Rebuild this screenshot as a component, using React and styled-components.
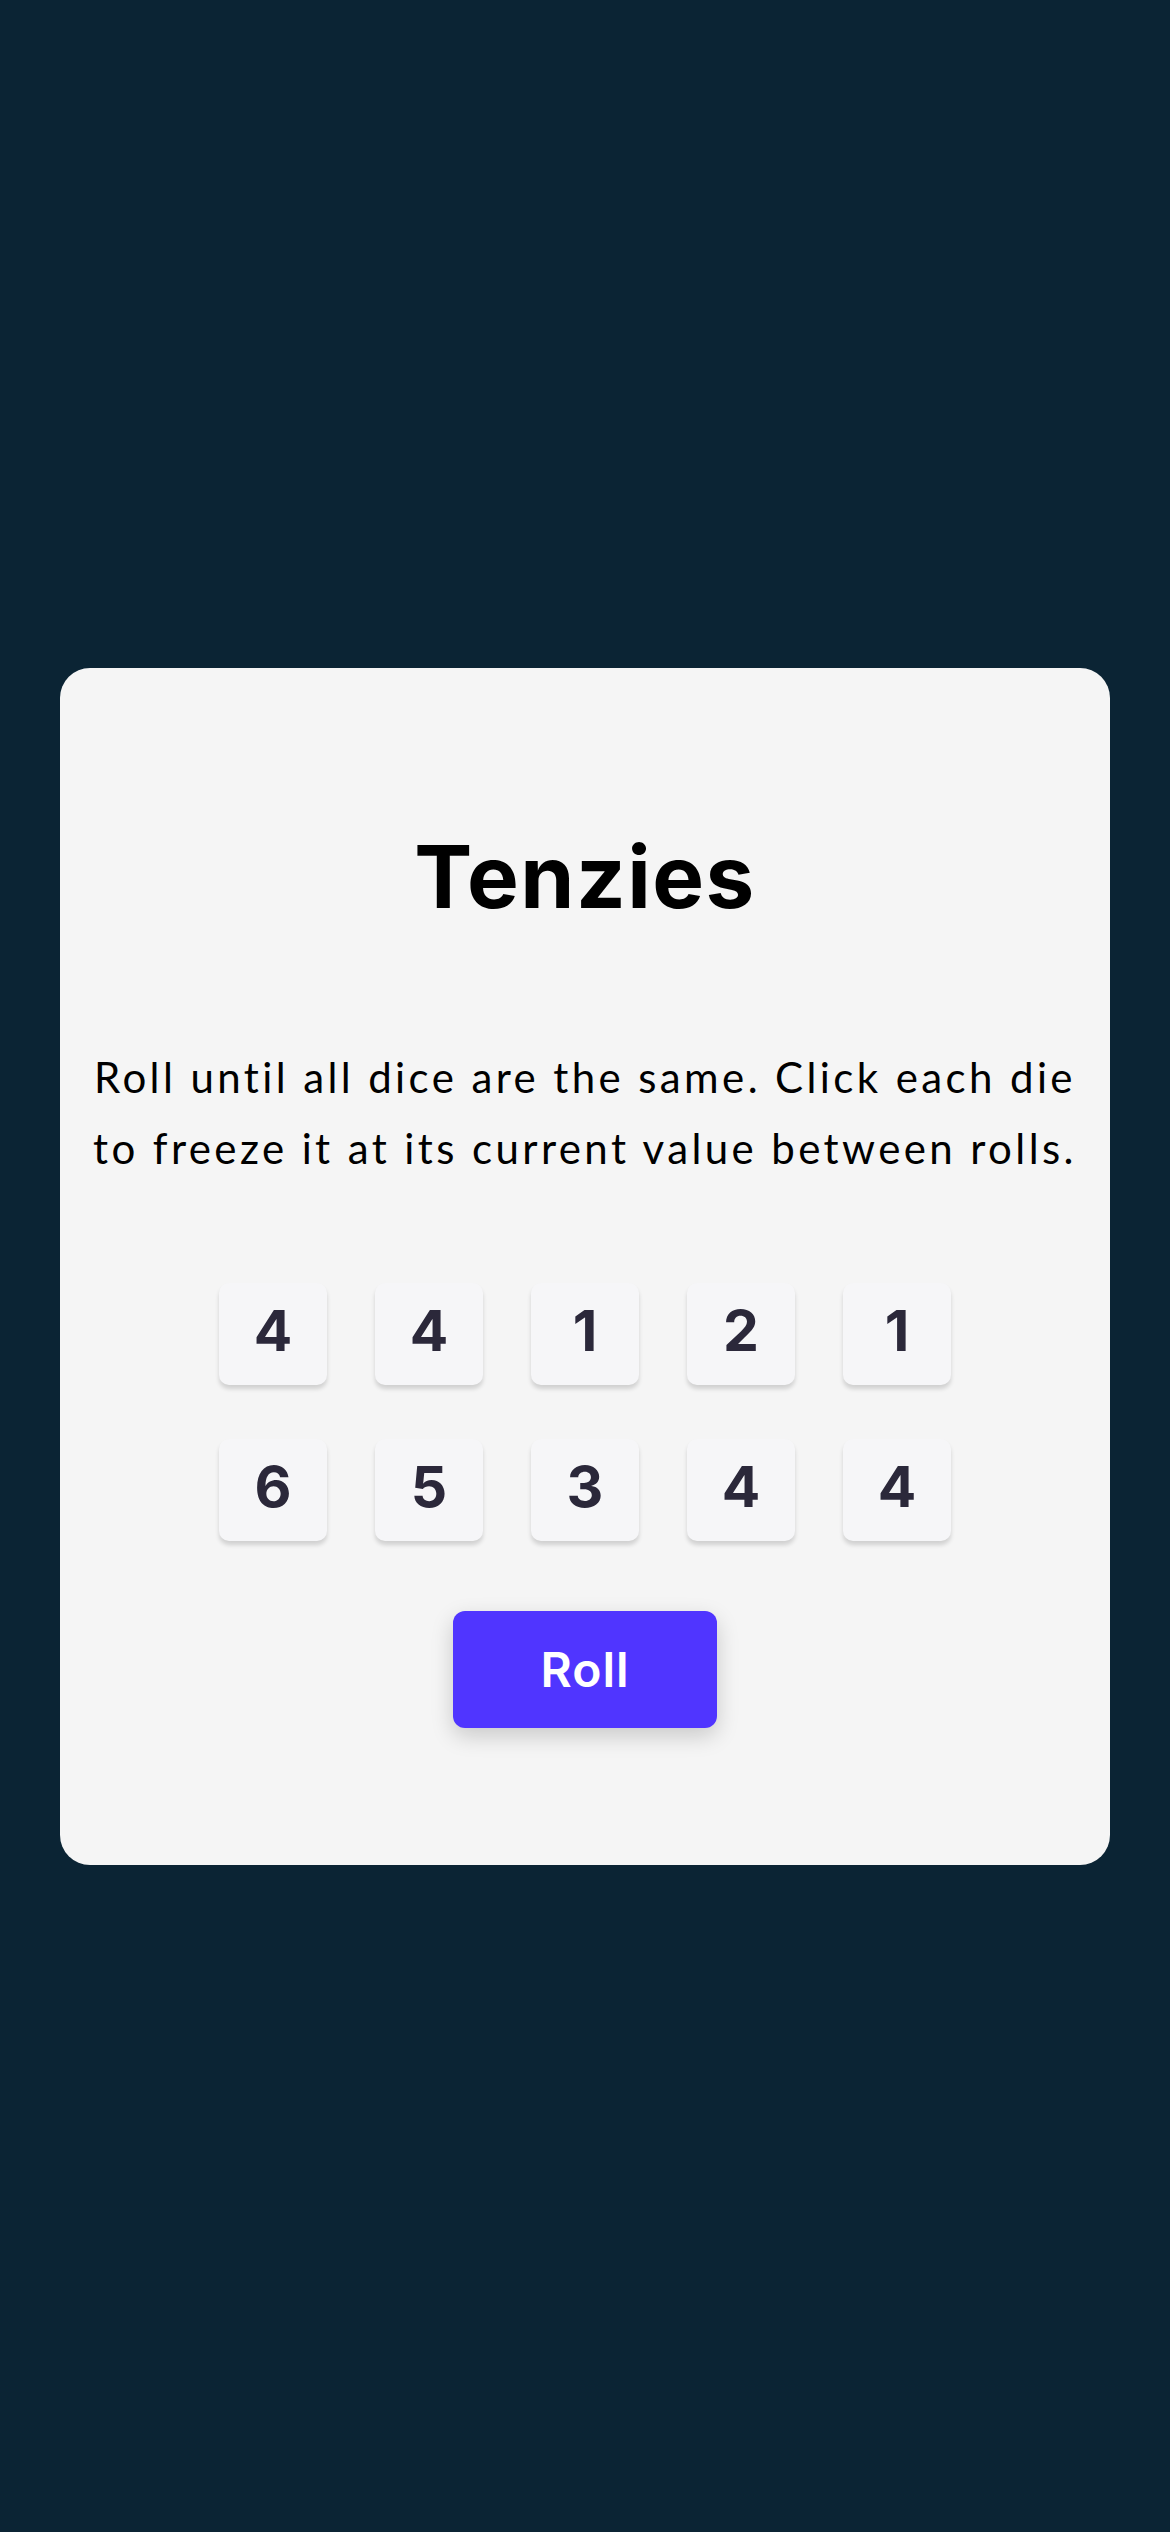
import React from "react";
import styled, { createGlobalStyle } from "styled-components";

const GlobalStyle = createGlobalStyle`
  * {
    box-sizing: border-box;
  }
  body {
    margin: 0;
    background-color: #0b2434;
    font-family: "Inter", "Liberation Sans", sans-serif;
  }
`;

const dice = [4, 4, 1, 2, 1, 6, 5, 3, 4, 4];

export default function App() {
  return (
    <>
      <GlobalStyle />
      <Page>
        <Main>
          <Title>Tenzies</Title>
          <Instructions>
            Roll until all dice are the same. Click each die to freeze it at
            its current value between rolls.
          </Instructions>
          <DiceGrid>
            {dice.map((value, i) => (
              <Die key={i}>{value}</Die>
            ))}
          </DiceGrid>
          <RollButton>Roll</RollButton>
        </Main>
      </Page>
    </>
  );
}

const Page = styled.div`
  min-height: 100vh;
  display: flex;
  align-items: center;
  justify-content: center;
  padding: 0 60px;
`;
const Main = styled.main`
  width: 100%;
  background-color: #f5f5f5;
  border-radius: 30px;
  padding: 165px 28px 137px;
  display: flex;
  flex-direction: column;
  align-items: center;
`;
const Title = styled.h1`
  margin: 0;
  font-size: 87px;
  line-height: 87px;
  font-weight: 700;
  letter-spacing: 1.5px;
  color: #000;
`;
const Instructions = styled.p`
  margin: 122px 0 0;
  font-family: "Lato", "Liberation Sans", sans-serif;
  font-size: 42px;
  line-height: 71px;
  font-weight: 400;
  letter-spacing: 3.4px;
  text-align: center;
  color: #000;
`;
const DiceGrid = styled.div`
  margin-top: 99px;
  display: grid;
  grid-template-columns: repeat(5, 108px);
  column-gap: 48px;
  row-gap: 54px;
`;
const Die = styled.div`
  width: 108px;
  height: 102px;
  border-radius: 10px;
  background-color: #f6f6f8;
  box-shadow: 0 4px 4px rgba(0, 0, 0, 0.15);
  display: flex;
  align-items: center;
  justify-content: center;
  padding-bottom: 6px;
  font-size: 57px;
  font-weight: 700;
  color: #2b283a;
  cursor: pointer;
`;
const RollButton = styled.button`
  margin-top: 70px;
  width: 264px;
  height: 117px;
  border: none;
  border-radius: 12px;
  background-color: #5035ff;
  color: #fff;
  font-family: "Inter", "Liberation Sans", sans-serif;
  font-size: 48px;
  font-weight: 600;
  letter-spacing: 1px;
  box-shadow: 0 8px 22px rgba(0, 0, 0, 0.18);
  cursor: pointer;
`;
